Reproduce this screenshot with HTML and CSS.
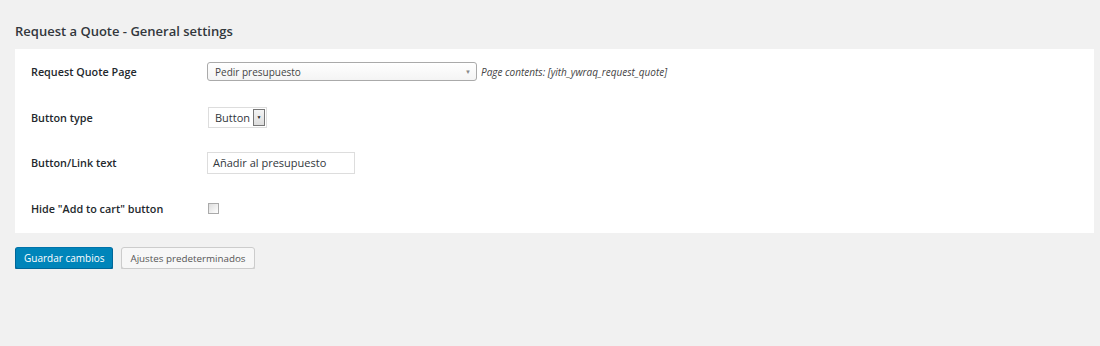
FILE: index.html
```html
<!DOCTYPE html>
<html lang="es">
<head>
    <meta charset="UTF-8">
    <title>Request a Quote - General settings</title>
    <link rel="stylesheet" href="styles.css">
</head>
<body>
    <div class="wrap">
        <h2 class="title">Request a Quote - General settings</h2>
        <div class="panel">
            <div class="row">
                <div class="label">Request Quote Page</div>
                <div class="field">
                    <div class="select-big">
                        <span>Pedir presupuesto</span>
                        <span class="caret">&#9660;</span>
                    </div>
                    <span class="desc">Page contents: [yith_ywraq_request_quote]</span>
                </div>
            </div>
            <div class="row">
                <div class="label">Button type</div>
                <div class="field">
                    <div class="select-small">
                        <span class="val">Button</span>
                        <span class="arrow">&#9660;</span>
                    </div>
                </div>
            </div>
            <div class="row">
                <div class="label">Button/Link text</div>
                <div class="field">
                    <div class="text-input">Añadir al presupuesto</div>
                </div>
            </div>
            <div class="row">
                <div class="label">Hide "Add to cart" button</div>
                <div class="field">
                    <span class="checkbox"></span>
                </div>
            </div>
        </div>
        <div class="actions">
            <button class="btn primary">Guardar cambios</button>
            <button class="btn">Ajustes predeterminados</button>
        </div>
    </div>
</body>
</html>
```

FILE: styles.css
```css
*{
    margin: 0;
    padding: 0;
    box-sizing: border-box;
}
body{
    background: #f1f1f1;
    font-family: "Open Sans", sans-serif;
    color: #23282d;
}
.wrap{
    padding: 22px 6px 0 15px;
}
.title{
    font-size: 13px;
    font-weight: 600;
    color: #32373c;
    line-height: 18px;
    margin-bottom: 9px;
}
.panel{
    background: #fff;
    padding: 0 0 2px 16px;
}
.row{
    display: flex;
    align-items: center;
    height: 45.5px;
}
.label{
    width: 176px;
    font-size: 10.8px;
    font-weight: 600;
    color: #23282d;
}
.field{
    display: flex;
    align-items: center;
}
.select-big{
    width: 270px;
    height: 19px;
    border: 1px solid #aaa;
    border-radius: 3px;
    background: linear-gradient(#fff, #f4f4f4);
    display: flex;
    align-items: center;
    justify-content: space-between;
    padding: 0 5px 0 7px;
    font-size: 10px;
    color: #444;
}
.caret{
    font-size: 6px;
    color: #888;
}
.desc{
    margin-left: 4px;
    font-size: 10px;
    font-style: italic;
    color: #444;
}
.select-small{
    display: flex;
    align-items: center;
    height: 21px;
    border: 1px solid #ddd;
    padding-left: 6px;
    margin-left: 1px;
    font-size: 11px;
    color: #32373c;
}
.select-small .val{
    margin-right: 3px;
}
.select-small .arrow{
    width: 12px;
    height: 17px;
    border: 1px solid #777;
    background: linear-gradient(#f4f4f4, #ddd);
    font-size: 5px;
    color: #222;
    display: flex;
    align-items: center;
    justify-content: center;
    margin-right: 1px;
}
.text-input{
    width: 148px;
    height: 22px;
    border: 1px solid #ddd;
    padding: 0 5px;
    font-size: 11px;
    line-height: 20px;
    color: #32373c;
}
.checkbox{
    display: block;
    width: 11px;
    height: 11px;
    border: 1px solid #aaa;
    background: linear-gradient(135deg, #ddd, #fff);
    margin-left: 1px;
}
.actions{
    display: flex;
    gap: 8px;
    margin-top: 14px;
}
.btn{
    height: 22px;
    padding: 0 8px;
    border: 1px solid #ccc;
    border-radius: 3px;
    background: #f7f7f7;
    font-family: "Open Sans", sans-serif;
    font-size: 9.8px;
    color: #555;
    box-shadow: 0 1px 0 #ccc;
}
.btn.primary{
    font-size: 10px;
    background: #0085ba;
    border-color: #0073aa #006799 #006799;
    color: #fff;
    box-shadow: 0 1px 0 #006799;
}
```
